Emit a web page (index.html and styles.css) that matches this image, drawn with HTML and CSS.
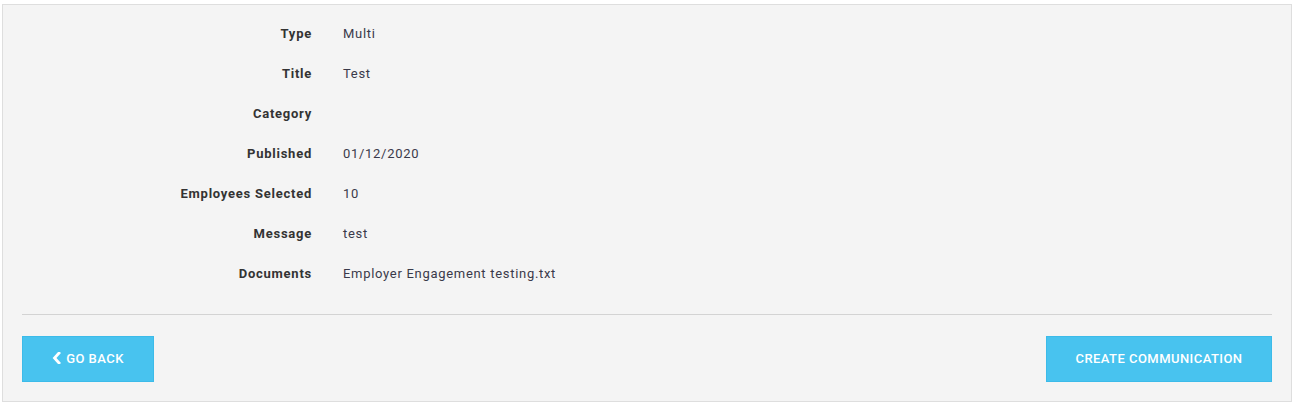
FILE: index.html
```html
<!DOCTYPE html>
<html>
<head>
<meta charset="utf-8">
<link rel="stylesheet" href="styles.css">
</head>
<body>
<div class="panel">
  <div class="details">
    <div class="label">Type</div><div class="value">Multi</div>
    <div class="label">Title</div><div class="value">Test</div>
    <div class="label">Category</div><div class="value"></div>
    <div class="label">Published</div><div class="value">01/12/2020</div>
    <div class="label">Employees Selected</div><div class="value">10</div>
    <div class="label">Message</div><div class="value">test</div>
    <div class="label">Documents</div><div class="value">Employer Engagement testing.txt</div>
  </div>
  <hr class="divider">
  <div class="actions">
    <button class="btn btn-back"><svg class="chev" width="9" height="12" viewBox="0 0 9 12"><path d="M7 1 L2.5 6 L7 11" fill="none" stroke="#fff" stroke-width="2.8" stroke-linecap="square" stroke-linejoin="miter"/></svg>GO BACK</button>
    <button class="btn btn-create">CREATE COMMUNICATION</button>
  </div>
</div>
</body>
</html>
```

FILE: styles.css
```css
html, body {
  margin: 0;
  padding: 0;
  background: #ffffff;
}
body {
  font-family: Roboto, "Liberation Sans", Arial, sans-serif;
  color: #333;
}
.panel {
  margin: 4px 3px 3px 2px;
  background: #f4f4f4;
  border: 1px solid #dedede;
  padding: 9px 19px 19px 19px;
}
.details {
  display: grid;
  grid-template-columns: 290px 1fr;
  column-gap: 31px;
  font-size: 13px;
}
.label, .value {
  height: 40px;
  line-height: 40px;
}
.label {
  text-align: right;
  font-weight: 700;
  color: #333;
  letter-spacing: 0.75px;
}
.value {
  color: #3a3a4a;
  letter-spacing: 0.7px;
}
.divider {
  border: 0;
  border-top: 1px solid #d3d3d3;
  margin: 20px 0 21px 0;
  height: 0;
}
.actions {
  display: flex;
  justify-content: space-between;
}
.btn {
  height: 46px;
  background: #48c3ef;
  border: 1px solid #3cbbe9;
  color: #fff;
  font-family: Roboto, "Liberation Sans", Arial, sans-serif;
  font-size: 13px;
  font-weight: 500;
  letter-spacing: 0.45px;
  display: flex;
  align-items: center;
  justify-content: center;
  padding: 0 0 2px 0;
  border-radius: 0;
}
.btn-back {
  width: 132px;
}
.btn-create {
  width: 226px;
}
.chev {
  margin-right: 5px;
}
```
